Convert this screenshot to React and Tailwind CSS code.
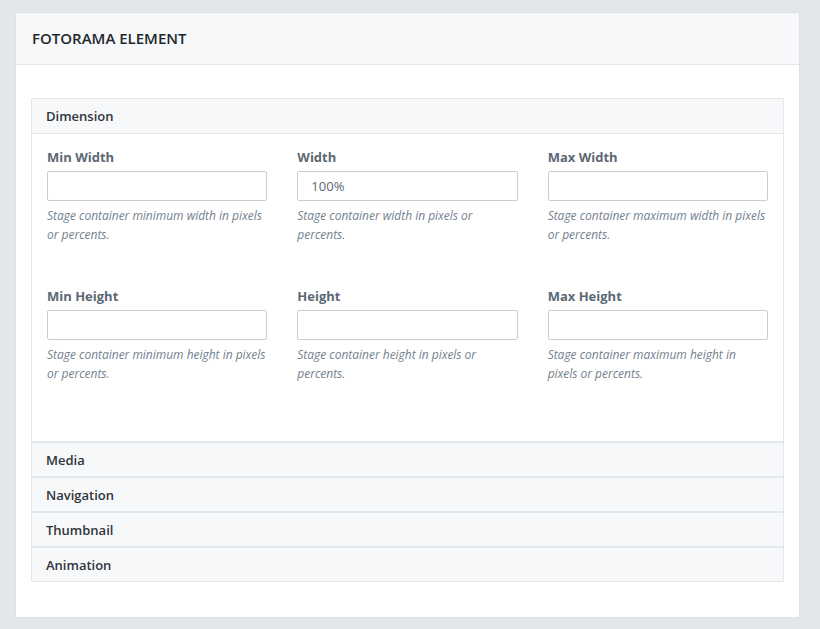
import React from "react";

const fields = [
  [
    { label: "Min Width", value: "", help: "Stage container minimum width in pixels or percents." },
    { label: "Width", value: "100%", help: "Stage container width in pixels or percents." },
    { label: "Max Width", value: "", help: "Stage container maximum width in pixels or percents." },
  ],
  [
    { label: "Min Height", value: "", help: "Stage container minimum height in pixels or percents." },
    { label: "Height", value: "", help: "Stage container height in pixels or percents." },
    { label: "Max Height", value: "", help: "Stage container maximum height in pixels or percents." },
  ],
];

function Field({ label, value, help }) {
  return (
    <div className="flex flex-col">
      <div className="text-[13px] leading-[20px] font-bold text-[#5c6873]">{label}</div>
      <input
        readOnly
        value={value}
        className="mt-[4px] h-[30px] w-full rounded-[2px] border border-[#c8ced3] bg-white px-[13px] text-[13px] text-[#5c6873] outline-none"
        style={{ fontFamily: "'Open Sans', sans-serif" }}
      />
      <div className="mt-[5px] text-[12px] leading-[19px] italic text-[#73818f] tracking-[-0.02px]">{help}</div>
    </div>
  );
}

function Section({ title }) {
  return (
    <div className="border border-[#e4e7ea] bg-[#f7f8fa] h-[35px] px-[14px] pt-[2px] flex items-center text-[13px] font-semibold text-[#2f353a]">
      {title}
    </div>
  );
}

export default function App() {
  return (
    <div
      className="min-h-[629px] bg-[#e4e7ea] pt-[12px] pl-[15px]"
      style={{ fontFamily: "'Open Sans', sans-serif" }}
    >
      <div className="w-[785px] h-[606px] bg-white border border-[#dde1e5] rounded-[2px] flex flex-col">
        <div className="h-[52px] bg-[#f7f8fa] border-b border-[#e4e7ea] px-[16px] flex items-center text-[15px] font-semibold text-[#23282c] uppercase">
          Fotorama Element
        </div>
        <div className="px-[15px] pt-[33px]">
          <div className="border border-[#e4e7ea]">
            <div className="h-[35px] bg-[#f7f8fa] border-b border-[#e4e7ea] px-[14px] pt-[2px] flex items-center text-[13px] font-semibold text-[#2f353a]">
              Dimension
            </div>
            <div className="px-[15px] pt-[13px] pb-[58px] flex flex-col gap-[42px]">
              {fields.map((row, i) => (
                <div key={i} className="grid grid-cols-3 gap-x-[30px]">
                  {row.map((f) => (
                    <Field key={f.label} {...f} />
                  ))}
                </div>
              ))}
            </div>
          </div>
          <Section title="Media" />
          <Section title="Navigation" />
          <Section title="Thumbnail" />
          <Section title="Animation" />
        </div>
      </div>
    </div>
  );
}
